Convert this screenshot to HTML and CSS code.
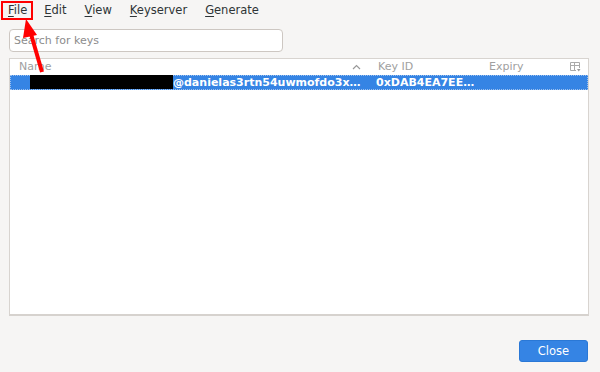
FILE: index.html
```html
<!DOCTYPE html>
<html lang="en">
<head>
  <meta charset="UTF-8" />
  <title>Keys</title>
  <link rel="stylesheet" href="styles.css">
</head>
<body>
<div class="window">
  <div class="menubar">
    <div class="menu first"><u>F</u>ile</div>
    <div class="menu"><u>E</u>dit</div>
    <div class="menu"><u>V</u>iew</div>
    <div class="menu"><u>K</u>eyserver</div>
    <div class="menu"><u>G</u>enerate</div>
  </div>
  <div class="search">
    <input type="text" placeholder="Search for keys">
  </div>
  <div class="table">
    <div class="head">
      <div class="col name">Name <span class="sort">
        <svg width="9" height="6" viewBox="0 0 9 6"><path d="M1 5 L4.5 1.5 L8 5" fill="none" stroke="#999" stroke-width="1.2"/></svg>
      </span></div>
      <div class="col keyid">Key ID</div>
      <div class="col expiry">Expiry</div>
      <div class="col cols">
        <svg width="11" height="10" viewBox="0 0 11 10"><path d="M0.5 0.5 H9.5 V6 M0.5 0.5 V8.5 H6 M0.5 3.5 H9.5 M4.5 0.5 V8.5" fill="none" stroke="#aaa" stroke-width="1"/><path d="M7 7 L10.5 7 L8.75 9.5 Z" fill="#999"/></svg>
      </div>
    </div>
    <div class="row selected">
      <div class="col name"><span class="redact"></span>@danielas3rtn54uwmofdo3x…</div>
      <div class="col keyid">0xDAB4EA7EE…</div>
      <div class="col expiry"></div>
      <div class="col cols"></div>
    </div>
  </div>
  <div class="footer">
    <button class="close">Close</button>
  </div>
</div>
<div class="callout">
  <svg width="60" height="80" viewBox="0 0 60 80">
    <path d="M42 72 L31 34" stroke="#f00" stroke-width="4" fill="none"/>
    <path d="M26 19 L37 35 L23 38 Z" fill="#f00"/>
  </svg>
</div>
</body>
</html>
```

FILE: styles.css
```css
* { box-sizing: border-box; margin: 0; padding: 0; }
html, body { height: 100%; font-family: 'DejaVu Sans', sans-serif; background: #f6f5f4; overflow: hidden; }
.window { display: flex; flex-direction: column; height: 372px; padding: 0 11px 10px 9px; }
.menubar { display: flex; height: 21px; align-items: center; font-size: 11.5px; color: #2e3436; margin-left: -9px; padding-left: 10px; }
.menu { margin-right: 18px; line-height: 15px; }
.menu u { text-decoration-thickness: 1px; text-underline-offset: 2px; }
.menu.first { outline: 2px solid #f00; outline-offset: 0; padding: 0 4px 0 5px; margin-left: -7px; margin-right: 13px; }
.search { margin-top: 8px; }
.search input { width: 274px; height: 23px; border: 1px solid #cdc7c2; border-radius: 4px; background: #fff; padding: 0 4px; font: 11px 'DejaVu Sans', sans-serif; color: #2e3436; }
.search input::placeholder { color: #8c8c8c; }
.table { margin-top: 6px; height: 258px; background: #fff; border: 1px solid #d8d4d0; border-bottom: 2px solid #d6d2ce; }
.head, .row { display: flex; }
.head { height: 15px; font-size: 11px; color: #a0a0a0; line-height: 15px; }
.row { height: 15px; font-size: 11px; line-height: 15px; margin-top: 1px; }
.col { white-space: nowrap; overflow: hidden; }
.col.name { width: 361px; padding-left: 9px; position: relative; }
.col.keyid { width: 111px; padding-left: 7px; }
.col.expiry { width: 85px; padding-left: 7px; }
.col.cols { flex: 1; display: flex; align-items: center; justify-content: center; padding-right: 4px; }
.sort { position: absolute; right: 10px; top: 0; }
.row.selected { background: #3584e4; color: #fff; font-weight: bold; outline: 1px dotted #9cc0ee; outline-offset: -1px; }
.row.selected .col.name { padding-left: 20px; display: flex; }
.redact { display: inline-block; width: 143px; height: 14px; background: #000; margin-top: 0; }
.row.selected .col.keyid { padding-left: 5px; }
.footer { flex: 1; display: flex; justify-content: flex-end; align-items: flex-end; }
.close { width: 69px; height: 22px; border: 1px solid #2a78d6; border-radius: 3px; background: #3584e4; color: #fff; font: 11.5px 'DejaVu Sans', sans-serif; margin-right: 1px; }
.callout { position: absolute; left: 0; top: 0; }
```
